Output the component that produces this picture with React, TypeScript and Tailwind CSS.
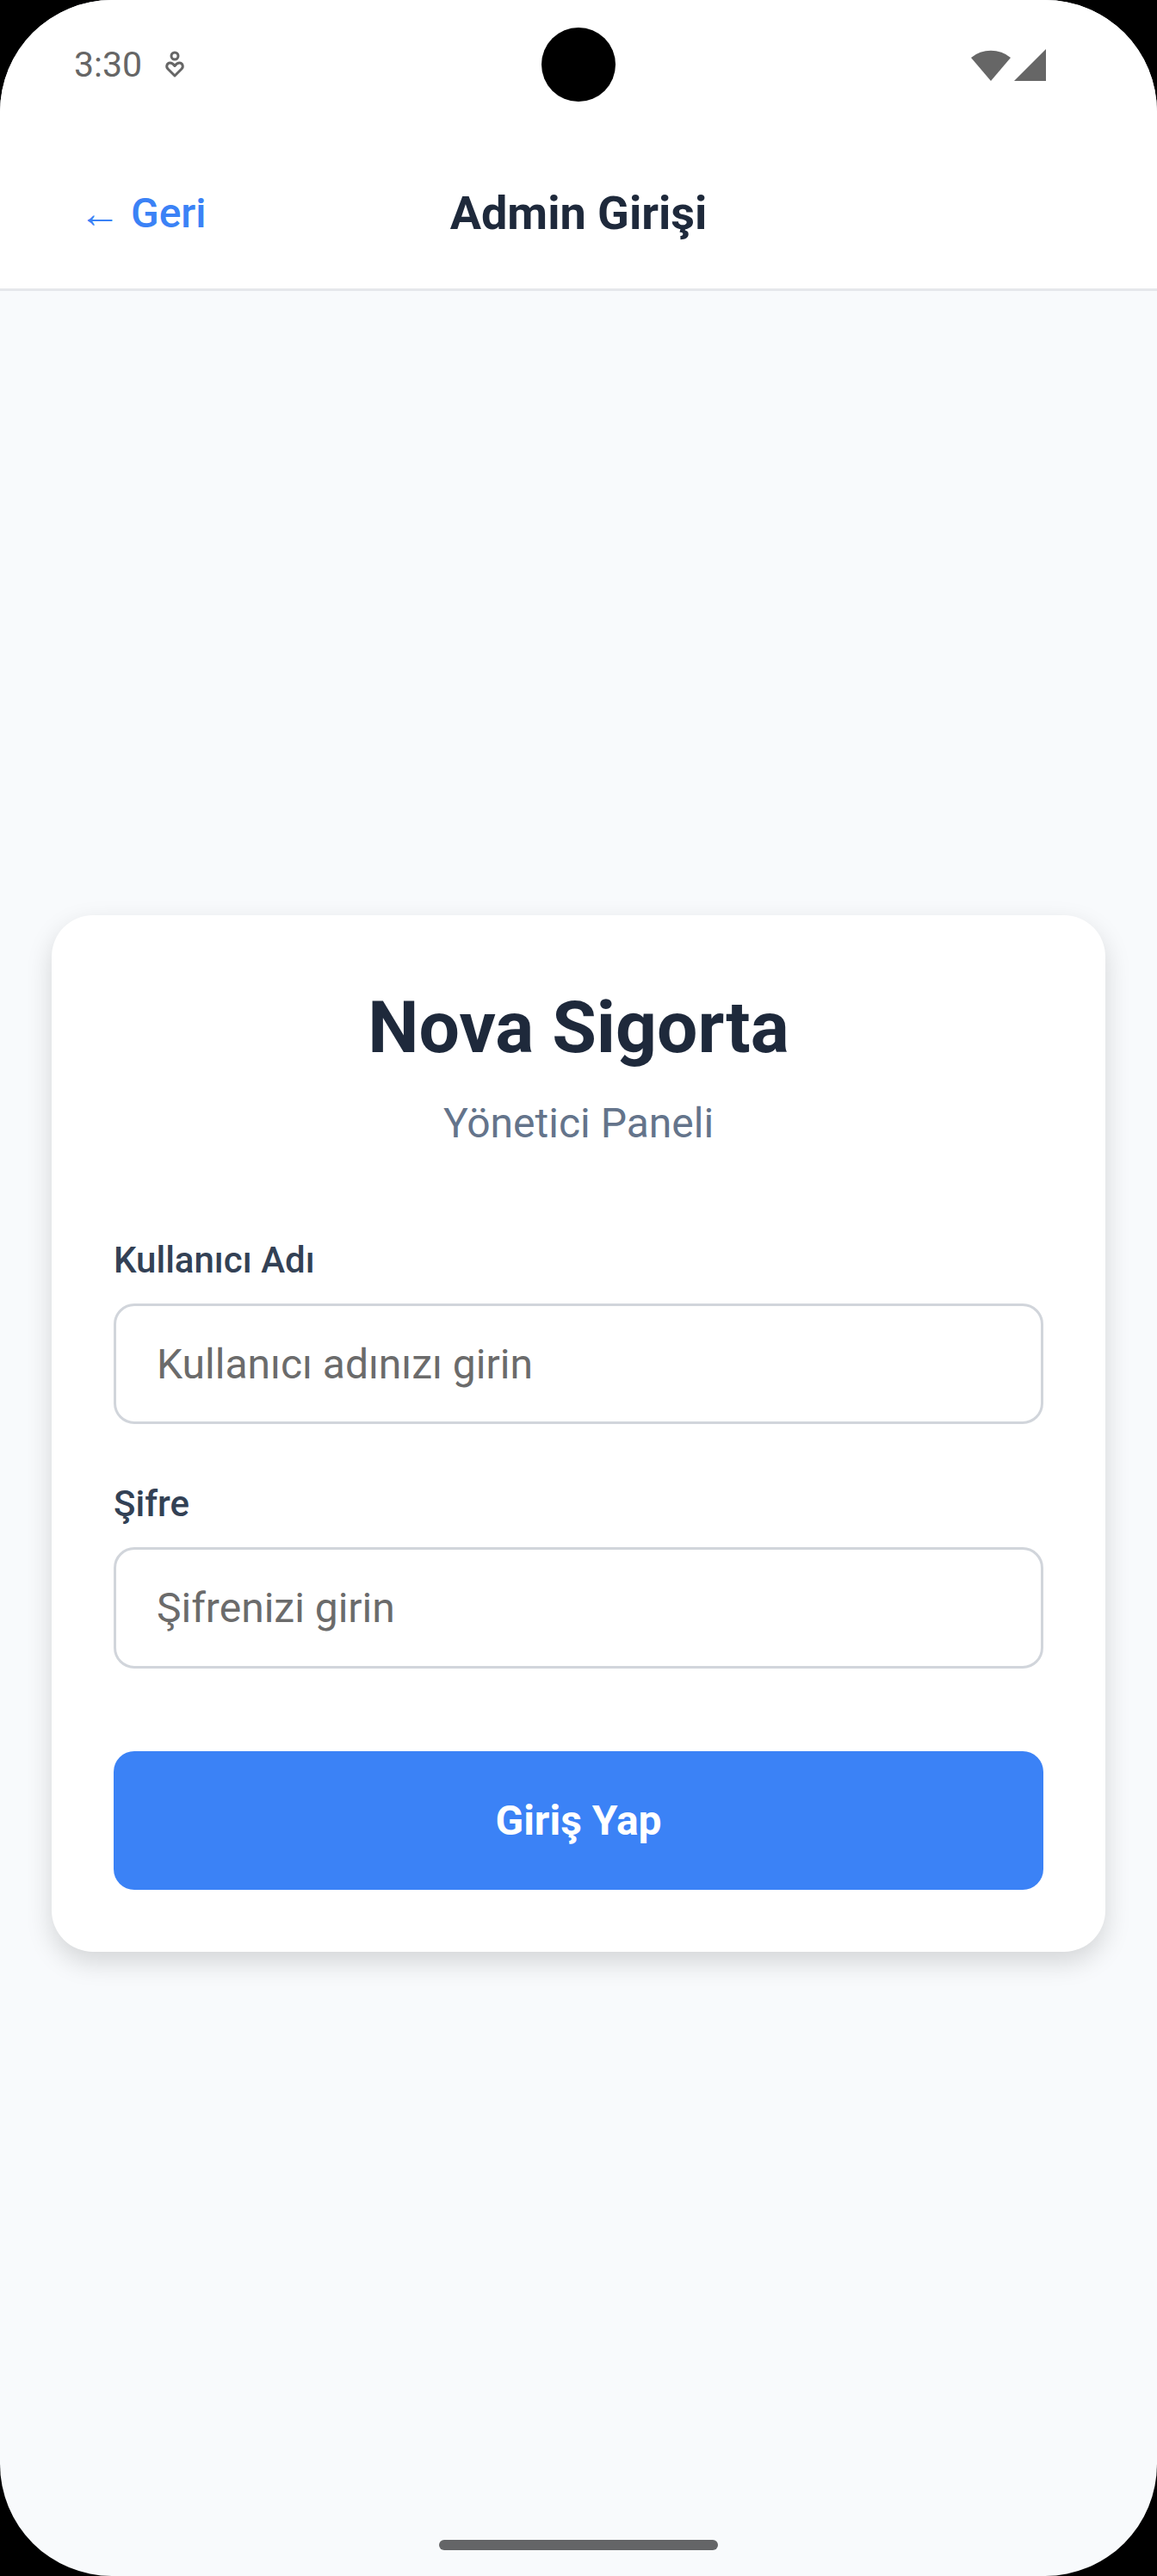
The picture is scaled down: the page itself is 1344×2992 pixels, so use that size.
import React from "react";

function StatusIcon() {
  return (
    <svg width="24" height="32" viewBox="0 0 24 32" fill="none" stroke="#666" strokeWidth="3">
      <circle cx="12" cy="6" r="4" />
      <path d="M12 29 L4 21 C1.5 18.5 3 14 6.5 14 C9 14 10.5 15.5 12 17.5 C13.5 15.5 15 14 17.5 14 C21 14 22.5 18.5 20 21 Z" strokeLinejoin="round" />
    </svg>
  );
}

function Wifi() {
  return (
    <svg width="46" height="37" viewBox="0 0 46 37">
      <path d="M23 37 L0 10 A36 36 0 0 1 46 10 Z" fill="#666" />
    </svg>
  );
}

function Signal() {
  return (
    <svg width="37" height="37" viewBox="0 0 37 37">
      <path d="M37 0 L37 37 L0 37 Z" fill="#666" />
    </svg>
  );
}

export default function App() {
  const font = { fontFamily: "Roboto, 'Noto Sans', Arial, sans-serif" };
  return (
    <div className="bg-black w-[1344px] h-[2992px]" style={font}>
      <div className="w-[1344px] h-[2992px] rounded-[130px] overflow-hidden bg-[#f8fafc] flex flex-col">
        {/* status bar */}
        <div className="h-[150px] bg-white grid grid-cols-[1fr_auto_1fr] items-center px-[86px] shrink-0">
          <div className="flex items-center gap-[26px]">
            <span className="text-[41px] text-[#666] leading-none">3:30</span>
            <StatusIcon />
          </div>
          <div className="w-[86px] h-[86px] rounded-full bg-black" />
          <div className="flex items-center justify-end gap-[4px] pr-[43px]">
            <Wifi />
            <Signal />
          </div>
        </div>
        {/* header */}
        <div className="h-[188px] bg-white border-b-[3px] border-[#e5e7eb] grid grid-cols-[1fr_auto_1fr] items-center px-[92px] pt-[10px] shrink-0">
          <div className="text-[48px] font-medium text-[#3b82f6] leading-none">← Geri</div>
          <div className="text-[54px] font-bold text-[#1e293b] leading-none">Admin Girişi</div>
          <div />
        </div>
        {/* main */}
        <div className="flex-1 flex flex-col justify-center px-[60px]">
          <div className="bg-white rounded-[48px] px-[72px] pt-[72px] pb-[72px] shadow-[0_12px_30px_rgba(0,0,0,0.15)] flex flex-col">
            <h1 className="text-[84px] font-bold text-[#1e293b] text-center leading-[118px]">Nova Sigorta</h1>
            <p className="text-[48px] text-[#64748b] text-center leading-[56px] mt-[24px]">Yönetici Paneli</p>
            <label className="text-[42px] font-medium text-[#334155] leading-[49px] mt-[106px]">Kullanıcı Adı</label>
            <input
              className="mt-[26px] h-[140px] border-[3px] border-[#d1d5db] rounded-[24px] px-[47px] text-[48px] text-[#1e293b] placeholder:text-[#6b6b6b] outline-none bg-white"
              style={font}
              placeholder="Kullanıcı adınızı girin"
            />
            <label className="text-[42px] font-medium text-[#334155] leading-[49px] mt-[68px]">Şifre</label>
            <input
              type="password"
              className="mt-[26px] h-[141px] border-[3px] border-[#d1d5db] rounded-[24px] px-[47px] text-[48px] text-[#1e293b] placeholder:text-[#6b6b6b] outline-none bg-white"
              style={font}
              placeholder="Şifrenizi girin"
            />
            <button className="mt-[96px] h-[161px] rounded-[24px] bg-[#3b82f6] text-white text-[48px] font-bold" style={font}>
              Giriş Yap
            </button>
          </div>
        </div>
        <div className="h-0 relative">
          <div className="absolute left-[510px] bottom-[30px] w-[324px] h-[12px] rounded-full bg-[#646567]" />
        </div>
      </div>
    </div>
  );
}
